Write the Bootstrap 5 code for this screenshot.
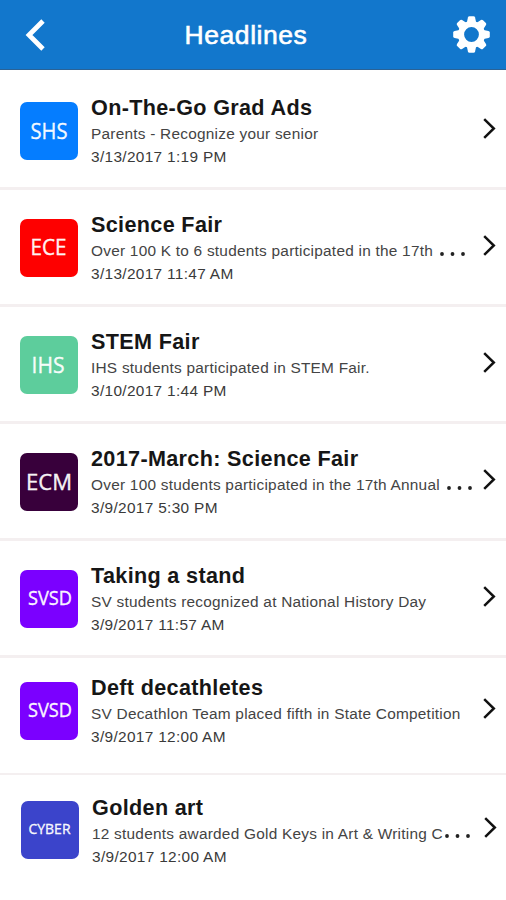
<!DOCTYPE html>
<html lang="en">
<head>
<meta charset="utf-8">
<meta name="viewport" content="width=device-width, initial-scale=1">
<title>Headlines</title>
<link href="https://cdn.jsdelivr.net/npm/bootstrap@5.3.0/dist/css/bootstrap.min.css" rel="stylesheet">
<style>
body{font-family:"Liberation Sans",Arial,sans-serif;background:#fff;overflow:hidden}
.topbar{height:70px;background:#1277cc;border-bottom:1px solid #2a6295;padding:0 16px 0 25px}
.topbar h1{font-size:26.5px;line-height:30px;letter-spacing:.55px;-webkit-text-stroke:.6px #fff;padding-right:6px}
.story{height:117px;padding:28.5px 10px 0 20px;border-bottom:3px solid #f4eff0;color:#161616}
.story.first{height:120px;padding-top:31.5px}
.story.sixth{padding-top:23.5px;border-bottom-width:2px}
.story.last{padding:26px 9px 0 21px;border:0}
.tile{width:58px;height:58px;border-radius:7px;margin-right:13px}
.tile text{font-family:"Open Sans","Noto Sans",sans-serif;fill:#fff;fill-opacity:.95;stroke:#fff;stroke-width:.35px}
.copy{min-width:0}
.headline{font-size:21.6px;line-height:26px;letter-spacing:.34px;margin-top:-6.5px;white-space:nowrap}
.summary{font-size:15.4px;line-height:24px;letter-spacing:.24px;color:#444;white-space:nowrap;margin-top:1px}
.stamp{font-size:15.4px;line-height:24px;letter-spacing:.33px;color:#3a3a3a;white-space:nowrap;margin-top:-1px}
.dots{width:26px;height:4px;margin:5px 0 0 7px}
.last .dots{margin-left:2px}
.go{width:13px;height:21px;margin-top:16px}
.tile.shs{background:#057dff}.tile.ece{background:#fe0000}.tile.ihs{background:#5dcd9c}
.tile.ecm{background:#38003b}.tile.svsd{background:#7b00ff}.tile.cyber{background:#3b44cb}
</style>
</head>
<body>
<svg class="d-none">
<symbol id="go" viewBox="0 0 13 21"><path d="M1.2 1.2 10.8 10.5 1.2 19.8" fill="none" stroke="#111" stroke-width="2.5"/></symbol>
<symbol id="dots" viewBox="0 0 26 4"><path d="M2 2h.01M12.5 2h.01M23 2h.01" stroke="#222" stroke-width="3.8" stroke-linecap="round"/></symbol>
</svg>
<header class="topbar d-flex align-items-center justify-content-between">
<svg width="20" height="32" viewBox="0 0 20 32"><path d="M18 2 4 16 18 30" fill="none" stroke="#fff" stroke-width="4.8"/></svg>
<h1 class="text-white fw-normal m-0">Headlines</h1>
<svg width="37" height="37" viewBox="-18.5 -18.5 37 37"><g fill="#fff"><path fill-rule="evenodd" d="M0-13.6A13.6 13.6 0 1 0 0 13.6A13.6 13.6 0 1 0 0-13.6M0-7.4A7.4 7.4 0 1 1 0 7.4A7.4 7.4 0 1 1 0-7.4"/><path id="t" d="M-4.6-12-3.6-16.9Q-3.3-18.3-2-18.3H2Q3.3-18.3 3.6-16.9L4.6-12Z"/><use href="#t" transform="rotate(45)"/><use href="#t" transform="rotate(90)"/><use href="#t" transform="rotate(135)"/><use href="#t" transform="rotate(180)"/><use href="#t" transform="rotate(225)"/><use href="#t" transform="rotate(270)"/><use href="#t" transform="rotate(315)"/></g></svg>
</header>
<main>
<article class="story first d-flex align-items-start">
<svg class="tile shs flex-shrink-0"><text x="10.5" y="36.5" font-size="22" textLength="37" lengthAdjust="spacingAndGlyphs">SHS</text></svg>
<div class="copy flex-grow-1"><h2 class="headline fw-bold mb-0">On-The-Go Grad Ads</h2><div class="summary">Parents - Recognize your senior</div><div class="stamp">3/13/2017 1:19 PM</div></div>
<svg class="go flex-shrink-0"><use href="#go"/></svg>
</article>
<article class="story d-flex align-items-start">
<svg class="tile ece flex-shrink-0"><text x="10.5" y="35.5" font-size="22" textLength="36" lengthAdjust="spacingAndGlyphs">ECE</text></svg>
<div class="copy flex-grow-1"><h2 class="headline fw-bold mb-0">Science Fair</h2><div class="summary d-flex align-items-center">Over 100 K to 6 students participated in the 17th<svg class="dots flex-shrink-0"><use href="#dots"/></svg></div><div class="stamp">3/13/2017 11:47 AM</div></div>
<svg class="go flex-shrink-0"><use href="#go"/></svg>
</article>
<article class="story d-flex align-items-start">
<svg class="tile ihs flex-shrink-0"><text x="11.5" y="36.5" font-size="22" textLength="33" lengthAdjust="spacingAndGlyphs">IHS</text></svg>
<div class="copy flex-grow-1"><h2 class="headline fw-bold mb-0">STEM Fair</h2><div class="summary">IHS students participated in STEM Fair.</div><div class="stamp">3/10/2017 1:44 PM</div></div>
<svg class="go flex-shrink-0"><use href="#go"/></svg>
</article>
<article class="story d-flex align-items-start">
<svg class="tile ecm flex-shrink-0"><text x="6" y="36.5" font-size="22" textLength="46" lengthAdjust="spacingAndGlyphs">ECM</text></svg>
<div class="copy flex-grow-1"><h2 class="headline fw-bold mb-0">2017-March: Science Fair</h2><div class="summary d-flex align-items-center">Over 100 students participated in the 17th Annual<svg class="dots flex-shrink-0"><use href="#dots"/></svg></div><div class="stamp">3/9/2017 5:30 PM</div></div>
<svg class="go flex-shrink-0"><use href="#go"/></svg>
</article>
<article class="story d-flex align-items-start">
<svg class="tile svsd flex-shrink-0"><text x="8" y="34.5" font-size="19.5" textLength="44" lengthAdjust="spacingAndGlyphs">SVSD</text></svg>
<div class="copy flex-grow-1"><h2 class="headline fw-bold mb-0">Taking a stand</h2><div class="summary">SV students recognized at National History Day</div><div class="stamp">3/9/2017 11:57 AM</div></div>
<svg class="go flex-shrink-0"><use href="#go"/></svg>
</article>
<article class="story sixth d-flex align-items-start">
<svg class="tile svsd flex-shrink-0"><text x="8" y="34.5" font-size="19.5" textLength="44" lengthAdjust="spacingAndGlyphs">SVSD</text></svg>
<div class="copy flex-grow-1"><h2 class="headline fw-bold mb-0">Deft decathletes</h2><div class="summary">SV Decathlon Team placed fifth in State Competition</div><div class="stamp">3/9/2017 12:00 AM</div></div>
<svg class="go flex-shrink-0"><use href="#go"/></svg>
</article>
<article class="story last d-flex align-items-start">
<svg class="tile cyber flex-shrink-0"><text x="7.5" y="33" font-size="15" textLength="42" lengthAdjust="spacingAndGlyphs">CYBER</text></svg>
<div class="copy flex-grow-1"><h2 class="headline fw-bold mb-0">Golden art</h2><div class="summary d-flex align-items-center">12 students awarded Gold Keys in Art &amp; Writing C<svg class="dots flex-shrink-0"><use href="#dots"/></svg></div><div class="stamp">3/9/2017 12:00 AM</div></div>
<svg class="go flex-shrink-0"><use href="#go"/></svg>
</article>
</main>
<script src="https://cdn.jsdelivr.net/npm/bootstrap@5.3.0/dist/js/bootstrap.bundle.min.js"></script>
</body>
</html>
